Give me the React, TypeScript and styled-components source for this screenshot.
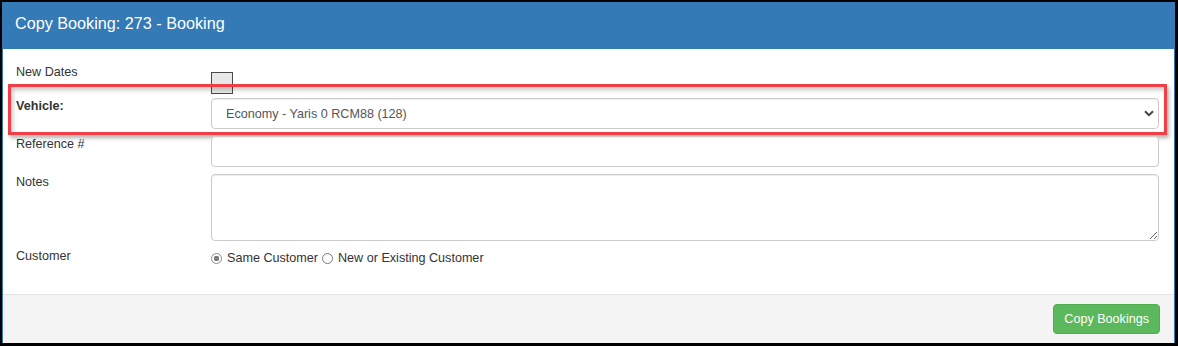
import React from 'react';
import styled, { createGlobalStyle } from 'styled-components';

const GlobalStyle = createGlobalStyle`
  html, body {
    margin: 0;
    padding: 0;
    background: #000;
  }
  body {
    font-family: "Liberation Sans", Arial, sans-serif;
    font-size: 12.6px;
    color: #333;
  }
`;

const Frame = styled.div`
  width: 1178px;
  height: 346px;
  box-sizing: border-box;
  border-style: solid;
  border-color: #000;
  border-width: 2px 3px 3px 2px;
  display: flex;
`;

const Panel = styled.div`
  flex: 1;
  display: flex;
  flex-direction: column;
  background: #fff;
  border: 1px solid #337ab7;
  border-bottom: none;
`;

const Header = styled.div`
  height: 47px;
  box-sizing: border-box;
  padding: 10px 14px 0 13px;
  background: #337ab7;
  margin: -1px -1px 0;
`;

const Title = styled.h4`
  margin: 0;
  font-size: 16.2px;
  line-height: 23px;
  font-weight: normal;
  color: #fff;
`;

const Body = styled.div`
  flex: 1;
  padding: 15px 15px 0 13px;
  display: flex;
  flex-direction: column;
`;

const Row = styled.div<{ $gap?: number }>`
  display: flex;
  align-items: flex-start;
  margin-bottom: ${(p) => (p.$gap ?? 7)}px;
`;

const HighlightRow = styled(Row)`
  position: relative;
  &::after {
    content: '';
    position: absolute;
    top: -14px;
    left: -8px;
    right: -8px;
    bottom: -6px;
    border: 3px solid #ef3f47;
    box-shadow: 2px 3px 4px rgba(0, 0, 0, 0.3), inset 2px 3px 4px rgba(0, 0, 0, 0.22);
    pointer-events: none;
  }
`;

const Label = styled.label<{ $bold?: boolean }>`
  width: 195px;
  flex: none;
  line-height: 18px;
  margin-top: -1px;
  font-weight: ${(p) => (p.$bold ? 'bold' : 'normal')};
  color: #333;
`;

const Control = styled.div<{ $pad?: number }>`
  flex: 1;
  position: relative;
  padding-top: ${(p) => p.$pad ?? 0}px;
`;

const Checkbox = styled.input.attrs({ type: 'checkbox' })`
  appearance: none;
  display: block;
  margin: 0;
  width: 22px;
  height: 22px;
  box-sizing: border-box;
  background: #e8e8e8;
  border: 1px solid #4a4a4a;
`;

const fieldBase = `
  display: block;
  width: 100%;
  box-sizing: border-box;
  margin: 0;
  border: 1px solid #ccc;
  border-radius: 4px;
  background: #fff;
  color: #555;
  font-family: "Liberation Sans", Arial, sans-serif;
  font-size: 12.6px;
  box-shadow: inset 0 1px 1px rgba(0, 0, 0, 0.075);
  outline: none;
`;

const Select = styled.select`
  ${fieldBase}
  appearance: none;
  height: 31px;
  padding: 0 30px 0 14px;
`;

const Chevron = styled.svg`
  position: absolute;
  right: 5px;
  top: 12px;
  width: 10px;
  height: 7px;
  pointer-events: none;
`;

const TextInput = styled.input`
  ${fieldBase}
  height: 31px;
  padding: 0 11px;
`;

const TextArea = styled.textarea`
  ${fieldBase}
  height: 67px;
  padding: 6px 11px;
  resize: vertical;
`;

const RadioGroup = styled.div`
  display: flex;
  align-items: center;
  line-height: 18px;
  color: #333;
`;

const Radio = styled.input.attrs({ type: 'radio' })`
  appearance: none;
  width: 11px;
  height: 11px;
  margin: 0 5px 0 0;
  box-sizing: border-box;
  border-radius: 50%;
  border: 1px solid #7a7a7a;
  background: #fff;
  flex: none;
  &:checked {
    border-color: #8a8a8a;
    background: radial-gradient(circle, #7d7d7d 0 2.6px, #fff 3px);
  }
`;

const RadioText = styled.span`
  margin-right: 4px;
`;

const Footer = styled.div`
  height: 49px;
  box-sizing: border-box;
  border-top: 1px solid #e2e2e2;
  background: #f4f4f4;
  display: flex;
  justify-content: flex-end;
  align-items: flex-start;
  padding: 9px 14px 0;
`;

const Button = styled.button`
  height: 30px;
  padding: 0 10px;
  border: 1px solid #4cae4c;
  border-radius: 4px;
  background: #5cb85c;
  color: #fff;
  font-family: "Liberation Sans", Arial, sans-serif;
  font-size: 12.6px;
  cursor: pointer;
`;

const App: React.FC = () => {
  return (
    <>
      <GlobalStyle />
      <Frame>
        <Panel>
          <Header>
            <Title>Copy Booking: 273 - Booking</Title>
          </Header>
          <Body>
            <Row $gap={4}>
              <Label>New Dates</Label>
              <Control $pad={8}>
                <Checkbox />
              </Control>
            </Row>
            <HighlightRow>
              <Label $bold>Vehicle:</Label>
              <Control>
                <Select defaultValue="128">
                  <option value="128">Economy - Yaris 0 RCM88 (128)</option>
                </Select>
                <Chevron viewBox="0 0 10 7">
                  <path d="M1 1.2 L5 5.2 L9 1.2" fill="none" stroke="#444" strokeWidth="2" />
                </Chevron>
              </Control>
            </HighlightRow>
            <Row>
              <Label>Reference #</Label>
              <Control>
                <TextInput type="text" />
              </Control>
            </Row>
            <Row>
              <Label>Notes</Label>
              <Control>
                <TextArea />
              </Control>
            </Row>
            <Row>
              <Label>Customer</Label>
              <Control $pad={1}>
                <RadioGroup>
                  <Radio name="customer" defaultChecked />
                  <RadioText>Same Customer</RadioText>
                  <Radio name="customer" />
                  <RadioText>New or Existing Customer</RadioText>
                </RadioGroup>
              </Control>
            </Row>
          </Body>
          <Footer>
            <Button>Copy Bookings</Button>
          </Footer>
        </Panel>
      </Frame>
    </>
  );
};

export default App;
